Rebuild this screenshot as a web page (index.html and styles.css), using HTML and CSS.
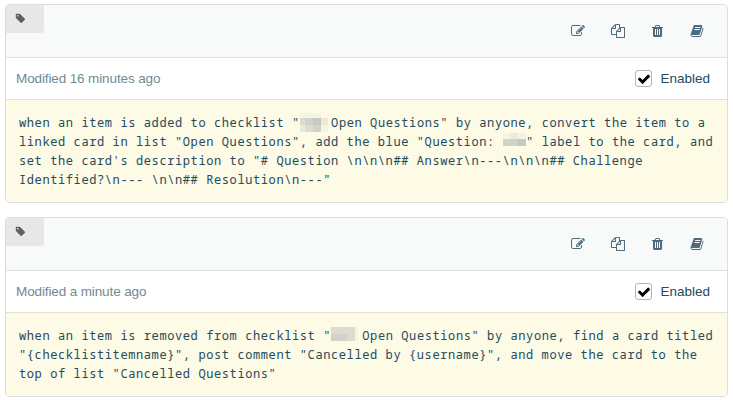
FILE: index.html
```
<!DOCTYPE html>
<html lang="en">
<head>
    <meta charset="UTF-8">
    <meta name="viewport" content="width=device-width, initial-scale=1.0">
    <title>Commands</title>
    <link rel="stylesheet" href="styles.css">
</head>
<body>
    <!-- Icon definitions, shared by every card -->
    <svg class="icon-defs" aria-hidden="true">
        <symbol id="icon-tag" viewBox="0 0 1792 1792"><path d="M576 448q0-53-37.500-90.500t-90.500-37.500-90.500 37.500-37.500 90.500 37.500 90.500 90.500 37.500 90.500-37.500 37.500-90.500zm1067 576q0 53-37 90l-491 492q-39 37-91 37-53 0-90-37l-715-716q-38-37-64.500-101t-26.500-117v-416q0-52 38-90t90-38h416q53 0 117 26.500t102 64.500l715 714q37 39 37 91z"/></symbol>
        <symbol id="icon-edit" viewBox="0 0 1792 1792"><path d="M888 1184l116-116-152-152-116 116v56h96v96h56zm440-720q-16-16-33 1l-350 350q-17 17-1 33t33-1l350-350q17-17 1-33zm80 594v190q0 119-84.500 203.500t-203.500 84.500h-832q-119 0-203.500-84.500t-84.500-203.500v-832q0-119 84.500-203.500t203.500-84.500h832q63 0 117 25 15 7 18 23 3 17-9 29l-49 49q-14 14-32 8-23-6-45-6h-832q-66 0-113 47t-47 113v832q0 66 47 113t113 47h832q66 0 113-47t47-113v-126q0-13 9-22l64-64q15-15 35-7t20 29zm-96-738l288 288-672 672h-288v-288zm444 132l-92 92-288-288 92-92q28-28 68-28t68 28l152 152q28 28 28 68t-28 68z"/></symbol>
        <symbol id="icon-copy" viewBox="0 0 1792 1792"><path d="M1696 384q40 0 68 28t28 68v1216q0 40-28 68t-68 28h-960q-40 0-68-28t-28-68v-288h-544q-40 0-68-28t-28-68v-672q0-40 20-88t48-76l408-408q28-28 76-48t88-20h416q40 0 68 28t28 68v328q68-40 128-40h416zm-544 213l-299 299h299v-299zm-640-384l-299 299h299v-299zm196 647l316-316v-416h-384v416q0 40-28 68t-68 28h-416v640h512v-256q0-40 20-88t48-76zm956 804v-1152h-384v416q0 40-28 68t-68 28h-416v640h896z"/></symbol>
        <symbol id="icon-trash" viewBox="64 0 1792 1792"><path d="M704 1376v-704q0-14-9-23t-23-9h-64q-14 0-23 9t-9 23v704q0 14 9 23t23 9h64q14 0 23-9t9-23zm256 0v-704q0-14-9-23t-23-9h-64q-14 0-23 9t-9 23v704q0 14 9 23t23 9h64q14 0 23-9t9-23zm256 0v-704q0-14-9-23t-23-9h-64q-14 0-23 9t-9 23v704q0 14 9 23t23 9h64q14 0 23-9t9-23zm-544-992h448l-48-117q-7-9-17-11h-317q-10 2-17 11zm928 32v64q0 14-9 23t-23 9h-96v948q0 83-47 143.500t-113 60.500h-832q-66 0-113-58.500t-47-141.500v-952h-96q-14 0-23-9t-9-23v-64q0-14 9-23t23-9h309l70-167q15-37 54-63t79-26h320q40 0 79 26t54 63l70 167h309q14 0 23 9t9 23z"/></symbol>
        <symbol id="icon-book" viewBox="0 0 1792 1792"><path d="M1703 478q40 57 18 129l-275 906q-19 64-76.500 107.500t-122.500 43.500h-923q-77 0-148.500-53.500t-99.500-131.500q-24-67-2-127 0-4 3-27t4-37q1-8-3-21.500t-3-19.500q2-11 8-21t16.500-23.500 16.500-23.500q23-38 45-91.500t30-91.500q3-10 .5-30t-.5-28q3-11 17-28t17-23q21-36 42-92t25-90q1-9-2.500-32t.5-28q4-13 22-30.500t22-22.500q19-26 42.500-84.500t27.500-96.500q1-8-3-25.500t-2-26.500q2-8 9-18t18-23 17-21q8-12 16.500-30.500t15-35 16-36 19.500-32 26.500-23.500 36-11.500 47.500 5.500l-1 3q38-9 51-9h761q74 0 114 56t18 130l-274 906q-36 119-71.500 153.500t-128.500 34.500h-869q-27 0-38 15-11 16-1 43 24 70 144 70h923q29 0 56-15.500t35-41.500l300-987q7-22 5-57 38 15 59 43zm-1064 2q-4 13 2 22.500t20 9.500h608q13 0 25.500-9.500t16.500-22.500l21-64q4-13-2-22.500t-20-9.500h-608q-13 0-25.500 9.500t-16.500 22.500zm-83 256q-4 13 2 22.500t20 9.500h608q13 0 25.500-9.500t16.500-22.500l21-64q4-13-2-22.500t-20-9.500h-608q-13 0-25.500 9.500t-16.500 22.500z"/></symbol>
        <symbol id="icon-check" viewBox="0 0 1792 1792"><path d="M1671 566q0 40-28 68l-724 724-136 136q-28 28-68 28t-68-28l-136-136-362-362q-28-28-28-68t28-68l136-136q28-28 68-28t68 28l294 295 656-657q28-28 68-28t68 28l136 136q28 28 28 68z"/></symbol>
    </svg>

    <div class="command">
        <div class="command-header">
            <div class="tag-tab"><svg class="icon"><use href="#icon-tag"/></svg></div>
            <div class="actions">
                <svg class="icon"><use href="#icon-edit"/></svg>
                <svg class="icon"><use href="#icon-copy"/></svg>
                <svg class="icon"><use href="#icon-trash"/></svg>
                <svg class="icon"><use href="#icon-book"/></svg>
            </div>
        </div>
        <div class="command-status">
            <span class="modified">Modified 16 minutes ago</span>
            <label class="enabled">
                <span class="checkbox"><svg class="icon"><use href="#icon-check"/></svg></span>
                Enabled
            </label>
        </div>
        <div class="command-text">
            when an item is added to checklist "<span class="redacted"><i class="p1"></i><i class="p1"></i><i class="p1"></i><i></i><i class="p3"></i><i class="p4"></i><i class="p5"></i><i class="p2"></i><i class="p2"></i><i class="p3"></i><i class="p4"></i><i class="p1"></i></span>Open Questions" by anyone, convert the item to a<br>
            linked card in list "Open Questions", add the blue "Question: <span class="redacted short"><i class="p1"></i><i class="p2"></i><i class="p1"></i><i class="p4"></i><i class="p4"></i><i class="p5"></i></span>" label to the card, and<br>
            set the card's description to "# Question \n\n\n## Answer\n---\n\n\n## Challenge<br>
            Identified?\n--- \n\n## Resolution\n---"
        </div>
    </div>

    <div class="command">
        <div class="command-header">
            <div class="tag-tab"><svg class="icon"><use href="#icon-tag"/></svg></div>
            <div class="actions">
                <svg class="icon"><use href="#icon-edit"/></svg>
                <svg class="icon"><use href="#icon-copy"/></svg>
                <svg class="icon"><use href="#icon-trash"/></svg>
                <svg class="icon"><use href="#icon-book"/></svg>
            </div>
        </div>
        <div class="command-status">
            <span class="modified">Modified a minute ago</span>
            <label class="enabled">
                <span class="checkbox"><svg class="icon"><use href="#icon-check"/></svg></span>
                Enabled
            </label>
        </div>
        <div class="command-text">
            when an item is removed from checklist "<span class="redacted even"><i class="p3"></i><i class="p3"></i><i class="p3"></i><i class="p1"></i><i class="p4"></i><i class="p4"></i><i class="p3"></i><i class="p1"></i></span>Open Questions" by anyone, find a card titled<br>
            "{checklistitemname}", post comment "Cancelled by {username}", and move the card to the<br>
            top of list "Cancelled Questions"
        </div>
    </div>
</body>
</html>
```
FILE: styles.css
```
* {
    box-sizing: border-box;
}
body {
    margin: 0;
    padding: 4px 5px 0;
    background-color: #fff;
    color: #244a5e;
    font-family: "Liberation Sans", Arial, sans-serif;
    font-size: 13.5px;
}
.icon-defs {
    display: none;
}
.icon {
    display: block;
    width: 14px;
    height: 14px;
    fill: currentColor;
}
.command {
    margin-bottom: 14px;
    border: 1px solid #dcdfdf;
    border-radius: 4px;
    overflow: hidden;
    width: 723px;
}
.command-header {
    display: flex;
    justify-content: space-between;
    align-items: flex-start;
    height: 53px;
    background-color: #f8faf9;
    border-bottom: 1px solid #dfe2e2;
}
.tag-tab {
    width: 38px;
    height: 28px;
    padding: 8px 0 0 9px;
    background-color: #e7e7e7;
    border-bottom-right-radius: 3px;
    color: #5f5f5f;
}
.tag-tab .icon {
    width: 11px;
    height: 11px;
}
.actions {
    display: flex;
    gap: 26px;
    padding: 19px 23px 0 0;
    color: #4d6b7d;
}
.actions .icon:last-child {
    margin-left: -1px;
}
.command-status {
    display: flex;
    justify-content: space-between;
    align-items: center;
    height: 42px;
    padding: 0 17px 0 10px;
    border-bottom: 1px solid #e2e2d3;
}
.modified {
    color: #738993;
    letter-spacing: -0.12px;
}
.enabled {
    display: flex;
    align-items: center;
    gap: 8px;
}
.checkbox {
    display: flex;
    align-items: center;
    justify-content: center;
    width: 17px;
    height: 17px;
    border: 1px solid #b5b5b5;
    border-radius: 3px;
    color: #000;
}
.command-text {
    padding: 13px;
    background-color: #fdfae5;
    font-family: "Noto Sans Mono", "DejaVu Sans Mono", monospace;
    font-size: 12px;
    letter-spacing: 0.6px;
    line-height: 19px;
    white-space: nowrap;
}

/* Pixelated names */
.redacted {
    display: inline-grid;
    grid-template: 5px 7px 7px / 5px 8px 8px 7px;
    width: 31.3px;
    height: 19px;
    vertical-align: top;
}
.redacted.short {
    grid-template: 6px 7px / 8px 7px 8px;
    width: 23.5px;
    padding-top: 1px;
}
.redacted.even {
    grid-template: 7px 7px / 8px 8px 8px 3px;
    padding-top: 1px;
}
.p1 {
    background-color: #f5f3e1;
}
.p2 {
    background-color: #eae9da;
}
.p3 {
    background-color: #dcdccf;
}
.p4 {
    background-color: #d2d3c8;
}
.p5 {
    background-color: #c5c9c1;
}
```
